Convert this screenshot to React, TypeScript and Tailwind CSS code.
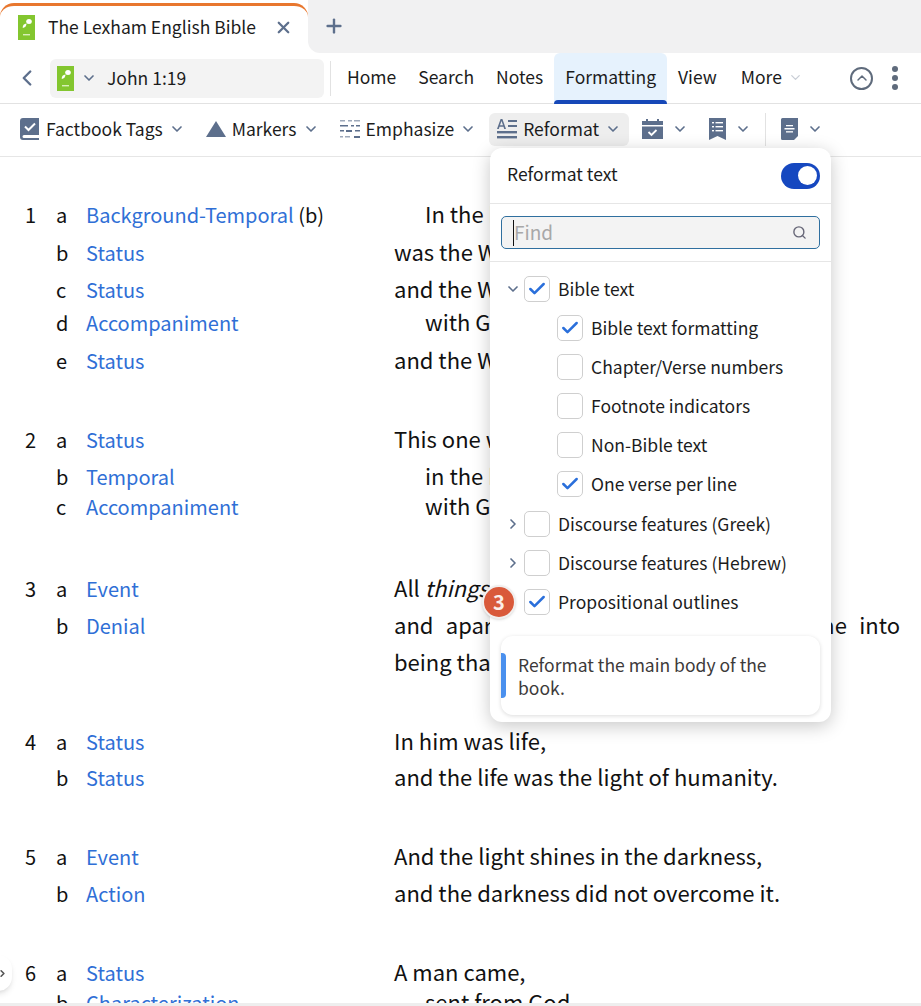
import { ChevronDown, ChevronLeft, ChevronRight, ChevronUp, Check, Plus, Search, X } from 'lucide-react';

const slate = '#5d6f8c';

function BookLogo() {
  return (
    <svg width="18" height="25" viewBox="0 0 18 25" className="shrink-0">
      <rect width="17" height="25" fill="#83c62f" />
      <ellipse cx="11" cy="6.500" rx="2.800" ry="2.500" fill="#fff" />
      <path d="M8.500 8.500c-2.500.3-4 1.800-3.800 4.500 2.200-.3 3.800-1.800 3.800-4.500z" fill="#fff" />
      <rect x="5" y="19" width="7" height="1.400" fill="#d8efb8" />
    </svg>
  );
}

function FactbookIcon() {
  return (
    <svg width="20" height="22" viewBox="0 0 20 22" fill={slate}>
      <path d="M3 0h16v17H4a1.500 1.500 0 0 0 0 3h15v2H3a3 3 0 0 1-3-3V3a3 3 0 0 1 3-3z" />
      <path d="M5 8.500l3.500 3.500L15 5.500" fill="none" stroke="#fff" strokeWidth="2" />
    </svg>
  );
}

function EmphasizeIcon() {
  return (
    <svg width="20" height="20" viewBox="0 0 20 20" fill={slate}>
      <rect x="0" y="1" width="5" height="1.500" opacity=".6" />
      <rect x="8" y="1" width="4" height="1.500" opacity=".6" />
      <rect x="14" y="1" width="6" height="1.500" opacity=".6" />
      <rect x="0" y="6" width="8" height="1.500" />
      <rect x="11" y="6" width="3" height="1.500" />
      <rect x="16" y="6" width="4" height="1.500" />
      <rect x="0" y="11" width="4" height="1.500" />
      <rect x="6" y="11" width="6" height="2" />
      <rect x="15" y="11" width="5" height="1.500" />
      <rect x="0" y="17" width="3" height="1.500" opacity=".6" />
      <rect x="5" y="17" width="5" height="1.500" opacity=".6" />
      <rect x="14" y="17" width="6" height="2" />
    </svg>
  );
}

function ReformatIcon() {
  return (
    <svg width="20" height="20" viewBox="0 0 20 20" fill={slate}>
      <path d="M0 10L3.600 0h1.800L9 10H7.200l-.7-2.200H2.500L1.800 10zM3 6.300h3L4.500 2z" />
      <rect x="11" y="1" width="9" height="2" />
      <rect x="11" y="6" width="9" height="2" />
      <rect x="0" y="12" width="20" height="2.400" />
      <rect x="0" y="17" width="20" height="2.400" />
    </svg>
  );
}

function CalendarIcon() {
  return (
    <svg width="21" height="20" viewBox="0 0 21 20" fill={slate}>
      <path d="M4 0h2v2h9V0h2v2h4v4H0V2h4zM0 7.500h21V20H0z" />
      <path d="M6.500 13l3 3 5-5" fill="none" stroke="#fff" strokeWidth="1.800" />
    </svg>
  );
}

function BookmarkIcon() {
  return (
    <svg width="17" height="22" viewBox="0 0 17 22" fill={slate}>
      <path d="M0 0h17v22l-8.500-4L0 22z" />
      <g fill="#fff">
        <rect x="3" y="4" width="2" height="1.400" />
        <rect x="6.500" y="4" width="7.500" height="1.400" />
        <rect x="3" y="8" width="2" height="1.400" />
        <rect x="6.500" y="8" width="7.500" height="1.400" />
        <rect x="3" y="12" width="2" height="1.400" />
        <rect x="6.500" y="12" width="7.500" height="1.400" />
      </g>
    </svg>
  );
}

function NoteIcon() {
  return (
    <svg width="17" height="22" viewBox="0 0 17 22" fill={slate}>
      <path d="M1.500 0H17v18l-4 4H1.500A1.500 1.500 0 0 1 0 20.500v-19A1.500 1.500 0 0 1 1.500 0z" />
      <g fill="#fff">
        <rect x="5" y="7" width="7" height="1.300" />
        <rect x="3.500" y="10" width="10" height="1.500" />
        <rect x="5" y="13.200" width="7" height="1.300" />
      </g>
    </svg>
  );
}

function ToolButton({ icon, label, active }: { icon: React.ReactNode; label?: string; active?: boolean }) {
  return (
    <div className={`flex items-center h-[33px] rounded-md ${active ? 'bg-[#eeeeee]' : ''} ${label ? 'px-[8px] gap-[6px]' : 'px-[6px] gap-[9px]'}`}>
      {icon}
      {label && <span className="text-[17.500px] text-[#1c1c1c] whitespace-nowrap">{label}</span>}
      <ChevronDown size={16} strokeWidth={2.500} color={slate} />
    </div>
  );
}

function NavItem({ label, active }: { label: string; active?: boolean }) {
  return (
    <div className={`relative flex items-center h-[51px] px-[11px] pb-[1px] text-[17.500px] text-[#1c1c1c] ${active ? 'bg-[#e6f2fd] rounded-t-md' : ''}`}>
      {label}
      {active && <div className="absolute left-0 right-0 bottom-0 h-[4px] bg-[#1648b8] rounded-t-md" />}
    </div>
  );
}

type Row = { n?: string; l: string; tag: string; extra?: string; text: React.ReactNode; indent?: boolean; h: number };

// heights are the distance to the next row, the outline has uneven leading
const rows: Row[] = [
  { n: '1', l: 'a', tag: 'Background-Temporal', extra: ' (b)', text: 'In the beginning', indent: true, h: 38 },
  { l: 'b', tag: 'Status', text: 'was the Word,', h: 37 },
  { l: 'c', tag: 'Status', text: 'and the Word was', h: 33 },
  { l: 'd', tag: 'Accompaniment', text: 'with God,', indent: true, h: 38 },
  { l: 'e', tag: 'Status', text: 'and the Word was God.', h: 79 },
  { n: '2', l: 'a', tag: 'Status', text: 'This one was', h: 37 },
  { l: 'b', tag: 'Temporal', text: 'in the beginning', indent: true, h: 30 },
  { l: 'c', tag: 'Accompaniment', text: 'with God.', indent: true, h: 82 },
  { n: '3', l: 'a', tag: 'Event', text: <>All <i>things</i> came into being through him,</>, h: 37 },
];

const rowsAfter: Row[] = [
  { n: '4', l: 'a', tag: 'Status', text: 'In him was life,', h: 36 },
  { l: 'b', tag: 'Status', text: 'and the life was the light of humanity.', h: 79 },
  { n: '5', l: 'a', tag: 'Event', text: 'And the light shines in the darkness,', h: 37 },
  { l: 'b', tag: 'Action', text: 'and the darkness did not overcome it.', h: 79 },
  { n: '6', l: 'a', tag: 'Status', text: 'A man came,', h: 30 },
  { l: 'b', tag: 'Characterization', text: 'sent from God,', indent: true, h: 30 },
];

function OutlineRow({ r }: { r: Row }) {
  return (
    <div style={{ height: r.h }}>
      <div className="flex items-baseline h-[30px] text-[20px] leading-[30px] whitespace-nowrap">
        <span className="w-[31px]">{r.n}</span>
        <span className="w-[30px]">{r.l}</span>
        <span className="w-[308px]">
          <span className="text-[#2f6fd6]">{r.tag}</span>
          {r.extra}
        </span>
        <span className={`text-[22px] ${r.indent ? 'pl-[31px]' : ''}`}>{r.text}</span>
      </div>
    </div>
  );
}

function Box({ checked }: { checked?: boolean }) {
  return (
    <div className="w-[26px] h-[26px] rounded-[5px] border border-[#cfcfcf] bg-white flex items-center justify-center shrink-0">
      {checked && <Check size={20} strokeWidth={3} color="#2a6fdb" />}
    </div>
  );
}

function TreeRow({ label, checked, depth, arrow }: { label: string; checked?: boolean; depth?: boolean; arrow?: 'down' | 'right' }) {
  return (
    <div className={`flex items-center h-[39px] ${depth ? 'pl-[67px]' : 'pl-[34px]'}`}>
      {arrow === 'down' && <ChevronDown size={16} color={slate} strokeWidth={2.500} className="absolute left-[15px]" />}
      {arrow === 'right' && <ChevronRight size={16} color={slate} strokeWidth={2.500} className="absolute left-[15px]" />}
      <Box checked={checked} />
      <span className="ml-[8px] pt-[2px] text-[17.500px] text-[#1c1c1c] whitespace-nowrap">{label}</span>
    </div>
  );
}

export default function App() {
  return (
    <div className="relative w-[921px] h-[1006px] overflow-hidden bg-white text-[#111] font-['Noto_Sans_CJK_SC','Noto_Sans',sans-serif]">
      {/* Tab strip */}
      <div className="flex h-[53px]">
        <div className="relative w-[308px] mt-[3px] bg-white rounded-t-[14px] border-t-[3px] border-[#e8772e] flex items-center pl-[18px] pb-[4px]">
          <BookLogo />
          <span className="ml-[12px] text-[17.500px] text-[#1c1c1c] whitespace-nowrap">The Lexham English Bible</span>
          <X size={19} strokeWidth={2.800} color={slate} className="ml-[18px]" />
        </div>
        <div className="flex-1 flex items-center pl-[15px] pb-[1px] bg-[#f1f1f2] rounded-bl-[12px]">
          <Plus size={22} strokeWidth={2.600} color={slate} />
        </div>
      </div>

      {/* Nav row */}
      <div className="flex items-center h-[51px] border-b border-[#e2e2e2]">
        <ChevronLeft size={26} strokeWidth={2.200} color={slate} className="ml-[14px]" />
        <div className="ml-[10px] w-[274px] h-[39px] rounded-md bg-[#f3f3f3] flex items-center pl-[7px]">
          <BookLogo />
          <ChevronDown size={16} strokeWidth={2.500} color={slate} className="ml-[6px]" />
          <span className="ml-[10px] text-[17.500px] text-[#1c1c1c]">John 1:19</span>
        </div>
        <div className="ml-[6px] w-px h-[35px] bg-[#e2e2e2] mr-[5px]" />
        <NavItem label="Home" />
        <NavItem label="Search" />
        <NavItem label="Notes" />
        <NavItem label="Formatting" active />
        <NavItem label="View" />
        <div className="flex items-center ml-[2px] px-[11px] pb-[1px] text-[17.500px] text-[#1c1c1c]">
          More
          <ChevronDown size={15} strokeWidth={2} color="#c9ced6" className="ml-[6px]" />
        </div>
        <div className="ml-auto w-[23px] h-[23px] rounded-full border-2 border-[#5f6b7c] flex items-center justify-center">
          <ChevronUp size={16} strokeWidth={2.200} color="#5f6b7c" />
        </div>
        <div className="ml-[19px] mr-[23px] flex flex-col gap-[3px]">
          <span className="w-[6px] h-[6px] rounded-full bg-[#5f6b7c]" />
          <span className="w-[6px] h-[6px] rounded-full bg-[#5f6b7c]" />
          <span className="w-[6px] h-[6px] rounded-full bg-[#5f6b7c]" />
        </div>
      </div>

      {/* Formatting toolbar */}
      <div className="flex items-center gap-[5px] h-[53px] pl-[12px] pb-[2px] border-b border-[#e6e6e6]">
        <ToolButton icon={<FactbookIcon />} label="Factbook Tags" />
        <ToolButton icon={<svg width="20" height="16" viewBox="0 0 20 16" fill={slate}><path d="M10 0l10 16H0z" /></svg>} label="Markers" />
        <ToolButton icon={<EmphasizeIcon />} label="Emphasize" />
        <ToolButton icon={<ReformatIcon />} label="Reformat" active />
        <div className="flex items-center ml-[2px]">
          <ToolButton icon={<CalendarIcon />} />
          <div className="w-[9px]" />
          <ToolButton icon={<BookmarkIcon />} />
          <div className="w-[8px]" />
          <div className="w-px h-[33px] bg-[#e2e2e2]" />
          <div className="w-[9px]" />
          <ToolButton icon={<NoteIcon />} />
        </div>
      </div>

      {/* Outline text */}
      <div className="pt-[41px] pl-[25px] pr-[21px]">
        {rows.map((r, i) => (
          <OutlineRow key={i} r={r} />
        ))}
        <div className="flex items-baseline text-[20px] leading-[30px] h-[116px]">
          <span className="w-[31px]" />
          <span className="w-[30px]">b</span>
          <span className="w-[308px] text-[#2f6fd6]">Denial</span>
          <div className="flex-1 text-[22px]">
            <p className="text-justify [text-align-last:justify]">and apart from him not one thing came into</p>
            <p className="mt-[7px]">being that has come into being.</p>
          </div>
        </div>
        {rowsAfter.map((r, i) => (
          <OutlineRow key={i} r={r} />
        ))}
      </div>

      {/* Side handle */}
      <div className="absolute left-[-16px] top-[955px] w-[28px] h-[36px] rounded-full bg-white shadow-md flex items-center justify-end pr-[4px]">
        <ChevronRight size={11} strokeWidth={3.500} color="#555" />
      </div>
      <div className="absolute left-0 right-0 bottom-0 h-[3px] bg-[#eeeeee]" />

      {/* Reformat dropdown */}
      <div className="absolute left-[490px] top-[148px] w-[341px] h-[574px] rounded-xl bg-white shadow-[0_4px_18px_rgba(0,0,0,0.22)]">
        <div className="flex items-center justify-between h-[56px] px-[11px] pl-[17px] border-b border-[#e6e6e6]">
          <span className="pb-[3px] text-[17.500px] text-[#1c1c1c]">Reformat text</span>
          <div className="w-[39px] h-[26px] rounded-full bg-[#1648c0] flex items-center justify-end pr-[3px]">
            <span className="w-[19px] h-[19px] rounded-full bg-white" />
          </div>
        </div>
        <div className="h-[58px] px-[11px] pt-[12px] border-b border-[#e6e6e6]">
          <div className="flex items-center h-[33px] rounded-[5px] border border-[#2f6f9f] bg-[#f3f3f3] pl-[11px] pr-[12px]">
            <span className="w-px h-[26px] bg-[#111]" />
            <span className="text-[19px] text-[#a8a8a8]">Find</span>
            <Search size={15} strokeWidth={2.200} color="#667" className="ml-auto" />
          </div>
        </div>
        <div className="relative pt-[7px]">
          <TreeRow label="Bible text" checked arrow="down" />
          <TreeRow label="Bible text formatting" checked depth />
          <TreeRow label="Chapter/Verse numbers" depth />
          <TreeRow label="Footnote indicators" depth />
          <TreeRow label="Non-Bible text" depth />
          <TreeRow label="One verse per line" checked depth />
          <div className="h-[1px]" />
          <TreeRow label="Discourse features (Greek)" arrow="right" />
          <TreeRow label="Discourse features (Hebrew)" arrow="right" />
          <TreeRow label="Propositional outlines" checked />
        </div>
        <div className="mx-[11px] mt-[15px] h-[79px] rounded-xl bg-white shadow-[0_1px_4px_rgba(0,0,0,0.14)] flex items-center overflow-hidden">
          <div className="w-[5px] h-[45px] rounded-r-sm bg-[#4a90ee] shrink-0" />
          <p className="ml-[12px] w-[270px] text-[17.500px] leading-[23px] text-[#3d3a3a]">Reformat the main body of the book.</p>
        </div>
      </div>

      {/* Step badge */}
      <div className="absolute left-[482px] top-[585px] w-[34px] h-[34px] rounded-full bg-[#d9593a] border-2 border-[#f1efee] shadow-sm flex items-center justify-center text-[20px] font-bold text-[#fbeee8]">
        3
      </div>
    </div>
  );
}
